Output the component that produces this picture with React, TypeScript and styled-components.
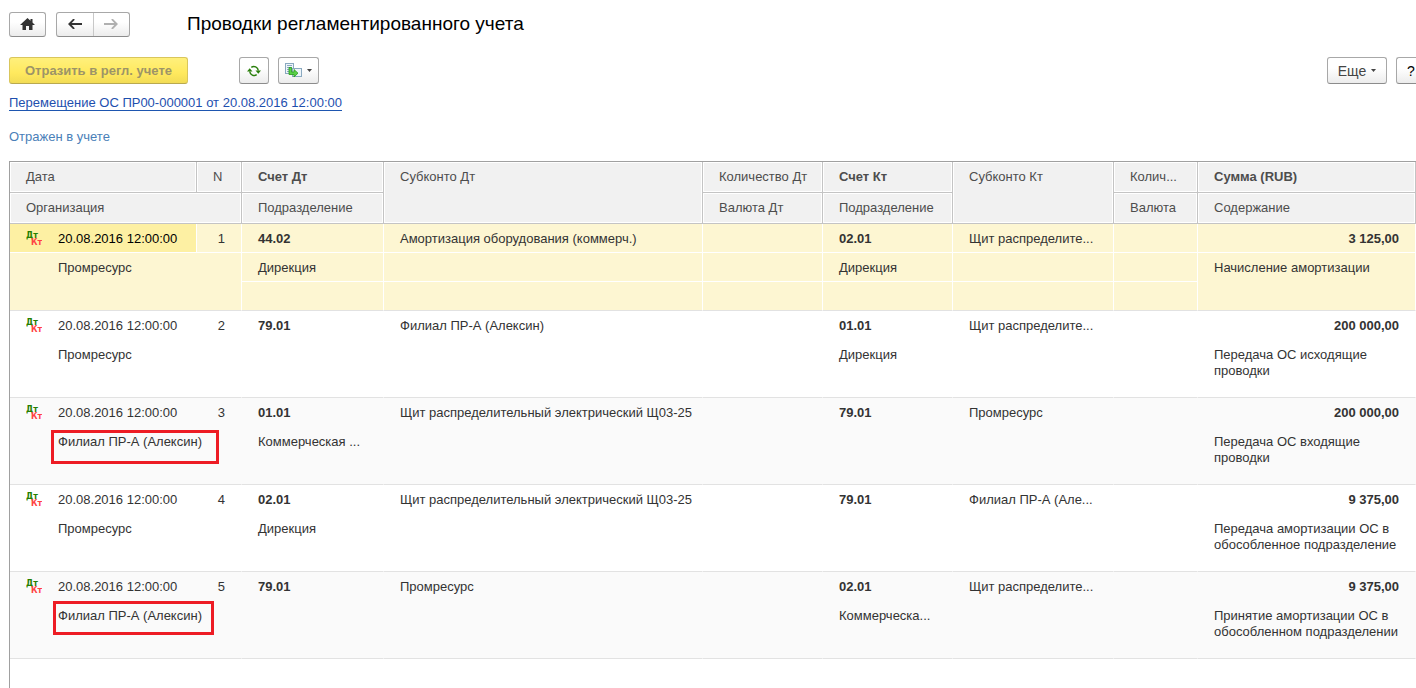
import React from 'react';
import styled, { createGlobalStyle, css } from 'styled-components';

const Global = createGlobalStyle`
  * { box-sizing: border-box; }
  body {
    margin: 0;
    background: #fff;
    color: #333;
    font: 13px/16px "Liberation Sans", Arial, sans-serif;
  }
  button { font: inherit; }
`;

const Page = styled.main`
  display: flex;
  flex-direction: column;
  height: 100vh;
  padding: 11px 0 0 9px;
  overflow: hidden;
`;

const TopBar = styled.header`
  display: flex;
  align-items: center;
  height: 26px;
`;

const face = css`
  border: 1px solid #a8a8a8;
  border-bottom-color: #8c8c8c;
  border-radius: 3px;
  background: linear-gradient(#fff 40%, #ececec);
`;

const NavGroup = styled.nav<{ $width: number; $gap: number }>`
  ${face}
  display: flex;
  width: ${p => p.$width}px;
  height: 25px;
  margin-right: ${p => p.$gap}px;
`;

const NavButton = styled.button`
  display: flex;
  flex: 1;
  align-items: center;
  justify-content: center;
  padding: 0;
  border: 0;
  background: none;
  & + & { border-left: 1px solid #c8c8c8; }
`;

const Title = styled.h1`
  margin: 0;
  color: #000;
  font-size: 19px;
  line-height: 24px;
  font-weight: 400;
`;

const Toolbar = styled.div`
  display: flex;
  align-items: center;
  margin-top: 20px;
  height: 27px;
`;

const ToolButton = styled.button<{ $width: number; $large?: boolean }>`
  ${face}
  display: flex;
  align-items: center;
  justify-content: center;
  gap: 5px;
  width: ${p => p.$width}px;
  height: 27px;
  margin-right: 9px;
  padding: 0;
  color: #444;
  font-size: ${p => (p.$large ? 14 : 13)}px;
`;

const MainButton = styled(ToolButton)`
  margin-right: 51px;
  border-color: #d9c65c;
  border-bottom-color: #b9a94f;
  background: linear-gradient(#fff07c, #ffe95e 60%, #f2dc56);
  color: #9c9468;
  font-weight: 700;
`;

const HelpButton = styled(ToolButton)`
  justify-content: flex-start;
  margin: 0;
  padding-left: 10px;
  border-right: 0;
  border-radius: 3px 0 0 3px;
  color: #000;
`;

const Spacer = styled.div`
  flex: 1;
`;

const DocLink = styled.a`
  align-self: flex-start;
  margin-top: 11px;
  border-bottom: 1px solid #1e56b0;
  color: #1e4fae;
  line-height: 15px;
  text-decoration: none;
`;

const Status = styled.p`
  margin: 18px 0 16px;
  color: #4a80b8;
`;

const Grid = styled.div`
  flex: 1;
  border: solid #a0a0a0;
  border-width: 1px 0 0 1px;
`;

const Table = styled.table`
  width: 100%;
  table-layout: fixed;
  border-collapse: separate;
  border-spacing: 0;
`;

const Col = styled.col<{ $width?: number }>`
  width: ${p => (p.$width ? `${p.$width}px` : 'auto')};
`;

const Head = styled.th<{ $bold?: boolean }>`
  height: 31px;
  padding: 7px 8px 0 16px;
  overflow: hidden;
  border: solid #c4c4c4;
  border-width: 0 1px 1px 0;
  box-shadow: inset 0 0 0 1px #fff;
  background: #f1f1f1;
  color: #4d4d4d;
  font-weight: ${p => (p.$bold ? 700 : 400)};
  text-align: left;
  text-overflow: ellipsis;
  vertical-align: top;
  white-space: nowrap;
`;

type Tone = 'selected' | 'plain' | 'alt';
const fill = { selected: '#fdf6d2', plain: '#fff', alt: '#fafafa' };

const Entry = styled.tbody<{ $tone: Tone }>`
  background: ${p => fill[p.$tone]};
  --line: ${p => (p.$tone === 'selected' ? '#fff' : 'transparent')};
`;

const Cell = styled.td<{
  $bold?: boolean; $right?: boolean; $wrap?: boolean; $last?: boolean; $current?: boolean; $indent?: boolean;
}>`
  position: relative;
  height: 29px;
  padding: 7px ${p => (p.$right ? 16 : 8)}px 0 ${p => (p.$indent ? 48 : 16)}px;
  overflow: hidden;
  border: solid var(--line);
  border-width: 0 1px 1px 0;
  ${p => p.$last && 'border-bottom-color: #e2e2e2;'}
  ${p => p.$current && 'background: #fdf0a3; color: #000;'}
  font-weight: ${p => (p.$bold ? 700 : 400)};
  text-align: ${p => (p.$right ? 'right' : 'left')};
  text-overflow: ellipsis;
  vertical-align: top;
  white-space: ${p => (p.$wrap ? 'normal' : 'nowrap')};
`;

const DateLine = styled.div`
  display: flex;
  gap: 16px;
`;

const Mark = styled.div<{ $left: number; $top: number; $width: number }>`
  position: absolute;
  left: ${p => p.$left}px;
  top: ${p => p.$top}px;
  width: ${p => p.$width}px;
  height: 34px;
  border: 3px solid #ed1c24;
`;

const Posting = () => (
  <svg width="16" height="16" viewBox="0 0 16 16" aria-hidden="true" fontFamily="DejaVu Sans, sans-serif" fontWeight="700">
    <text x="0" y="7" fontSize="8" fill="#267f00">Дт</text>
    <text x="5" y="14" fontSize="8" fill="#ff4343">Кт</text>
  </svg>
);

const HomeIcon = () => (
  <svg width="15" height="12" viewBox="0 0 15 12" aria-hidden="true">
    <path d="M7.500 0 0 7h2.500v5H6V8h3v4h3.500V7H15l-2.500-2.400V1h-2v1.700Z" fill="#333" />
  </svg>
);

const ArrowIcon = ({ color, flip }: { color: string; flip?: boolean }) => (
  <svg width="14" height="10" viewBox="0 0 14 10" aria-hidden="true">
    <path
      d={flip ? 'M14 5 9 0H7.500v1L10.300 4H0v2h10.300L7.500 9v1H9Z' : 'M0 5 5 0h1.500v1L3.700 4H14v2H3.700L6.500 9v1H5Z'}
      fill={color}
    />
  </svg>
);

const RefreshIcon = () => (
  <svg width="14" height="12" viewBox="0 0 14 12" aria-hidden="true">
    <path d="M4.300 2.300A4.500 4.500 0 0 1 11.300 5.500M9.700 9.700A4.500 4.500 0 0 1 2.700 6.500" fill="none" stroke="#2a7f0c" strokeWidth="1.500" />
    <path d="M8.500 5.500H14L11.300 8.700ZM0 6.500h5.500L2.700 3.300Z" fill="#2a7f0c" />
  </svg>
);

const CopyIcon = () => (
  <svg width="17" height="15" viewBox="0 0 17 15" aria-hidden="true">
    <rect x="0.500" y="0.500" width="8" height="10" fill="#eef5fa" stroke="#8aa9c0" />
    <path d="M2 2.500h5M2 4.500h5M2 6.500h2M2 8.500h2" stroke="#8aa9c0" />
    <rect x="7.500" y="5.500" width="9" height="8" fill="#eef5fa" stroke="#8aa9c0" />
    <path d="M4 4.500h2.500V9H9V6.500l4 3.700L9 14v-2.500H4Z" fill="#5ad048" stroke="#279a1c" strokeWidth="0.800" />
  </svg>
);

const Caret = () => (
  <svg width="5" height="3" viewBox="0 0 5 3" aria-hidden="true">
    <path d="M0 0h5L2.500 3Z" fill="#444" />
  </svg>
);

type Row = {
  org: string; dt: string; dtDept?: string; dtSub: string;
  kt: string; ktDept?: string; ktSub: string; sum: string; note: string;
  mark?: [number, number, number];
};

const SHIELD = 'Щит распределительный электрический Щ03-25';
const rows: Row[] = [
  { org: 'Промресурс', dt: '44.02', dtDept: 'Дирекция', dtSub: 'Амортизация оборудования (коммерч.)', kt: '02.01', ktDept: 'Дирекция', ktSub: 'Щит распределите...', sum: '3 125,00', note: 'Начисление амортизации' },
  { org: 'Промресурс', dt: '79.01', dtSub: 'Филиал ПР-А (Алексин)', kt: '01.01', ktDept: 'Дирекция', ktSub: 'Щит распределите...', sum: '200 000,00', note: 'Передача ОС исходящие проводки' },
  { org: 'Филиал ПР-А (Алексин)', dt: '01.01', dtDept: 'Коммерческая ...', dtSub: SHIELD, kt: '79.01', ktSub: 'Промресурс', sum: '200 000,00', note: 'Передача ОС входящие проводки', mark: [41, 3, 168] },
  { org: 'Промресурс', dt: '02.01', dtDept: 'Дирекция', dtSub: SHIELD, kt: '79.01', ktSub: 'Филиал ПР-А (Але...', sum: '9 375,00', note: 'Передача амортизации ОС в обособленное подразделение' },
  { org: 'Филиал ПР-А (Алексин)', dt: '79.01', dtSub: 'Промресурс', kt: '02.01', ktDept: 'Коммерческа...', ktSub: 'Щит распределите...', sum: '9 375,00', note: 'Принятие амортизации ОС в обособленном подразделении', mark: [43, 0, 161] },
];

export default function App() {
  return (
    <Page>
      <Global />
      <TopBar>
        <NavGroup $width={37} $gap={10}><NavButton aria-label="Домой"><HomeIcon /></NavButton></NavGroup>
        <NavGroup $width={74} $gap={57}>
          <NavButton aria-label="Назад"><ArrowIcon color="#333" /></NavButton>
          <NavButton aria-label="Вперед"><ArrowIcon color="#b0b0b0" flip /></NavButton>
        </NavGroup>
        <Title>Проводки регламентированного учета</Title>
      </TopBar>
      <Toolbar>
        <MainButton $width={179}>Отразить в регл. учете</MainButton>
        <ToolButton $width={30} aria-label="Обновить"><RefreshIcon /></ToolButton>
        <ToolButton $width={41} aria-label="Скопировать"><CopyIcon /><Caret /></ToolButton>
        <Spacer />
        <ToolButton $width={60} $large>Еще<Caret /></ToolButton>
        <HelpButton $width={20} $large>?</HelpButton>
      </Toolbar>
      <DocLink href="#document">Перемещение ОС ПР00-000001 от 20.08.2016 12:00:00</DocLink>
      <Status>Отражен в учете</Status>
      <Grid>
        <Table>
          <colgroup>
            <Col $width={187} /><Col $width={45} /><Col $width={142} /><Col /><Col $width={120} />
            <Col $width={130} /><Col $width={161} /><Col $width={84} /><Col $width={218} />
          </colgroup>
          <thead>
            <tr>
              <Head>Дата</Head>
              <Head>N</Head>
              <Head $bold>Счет Дт</Head>
              <Head rowSpan={2}>Субконто Дт</Head>
              <Head>Количество Дт</Head>
              <Head $bold>Счет Кт</Head>
              <Head rowSpan={2}>Субконто Кт</Head>
              <Head>Колич...</Head>
              <Head $bold>Сумма (RUB)</Head>
            </tr>
            <tr>
              <Head colSpan={2}>Организация</Head>
              <Head>Подразделение</Head>
              <Head>Валюта Дт</Head>
              <Head>Подразделение</Head>
              <Head>Валюта</Head>
              <Head>Содержание</Head>
            </tr>
          </thead>
          {rows.map((r, i) => (
            <Entry key={i} $tone={i === 0 ? 'selected' : i % 2 ? 'plain' : 'alt'}>
              <tr>
                <Cell $current={i === 0}><DateLine><Posting />20.08.2016 12:00:00</DateLine></Cell>
                <Cell $right>{i + 1}</Cell>
                <Cell $bold>{r.dt}</Cell>
                <Cell>{r.dtSub}</Cell>
                <Cell />
                <Cell $bold>{r.kt}</Cell>
                <Cell>{r.ktSub}</Cell>
                <Cell />
                <Cell $bold $right>{r.sum}</Cell>
              </tr>
              <tr>
                <Cell colSpan={2} rowSpan={2} $indent $last>
                  {r.org}
                  {r.mark && <Mark $left={r.mark[0]} $top={r.mark[1]} $width={r.mark[2]} />}
                </Cell>
                <Cell>{r.dtDept}</Cell>
                <Cell />
                <Cell />
                <Cell>{r.ktDept}</Cell>
                <Cell />
                <Cell />
                <Cell rowSpan={2} $wrap $last>{r.note}</Cell>
              </tr>
              <tr>
                <Cell $last /><Cell $last /><Cell $last /><Cell $last /><Cell $last /><Cell $last />
              </tr>
            </Entry>
          ))}
        </Table>
      </Grid>
    </Page>
  );
}
